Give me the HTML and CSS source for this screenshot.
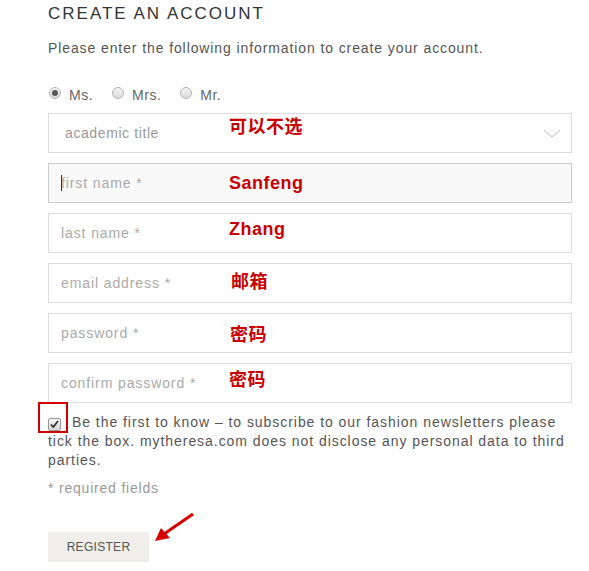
FILE: index.html
```html
<!DOCTYPE html>
<html lang="en">

<head>
    <meta charset="UTF-8">
    <meta name="viewport" content="width=device-width, initial-scale=1.0">
    <title>Create an account</title>
    <link rel="stylesheet" href="styles.css">
</head>

<body>
    <div class="register">
        <h1 class="title">CREATE AN ACCOUNT</h1>
        <p class="intro">Please enter the following information to create your account.</p>

        <div class="salutation">
            <label class="radio"><span class="dot checked"></span>Ms.</label>
            <label class="radio"><span class="dot"></span>Mrs.</label>
            <label class="radio"><span class="dot"></span>Mr.</label>
        </div>

        <div class="field">
            <div class="select">
                <span>academic title</span>
                <svg class="chevron" width="18" height="10" viewBox="0 0 18 10">
                    <polyline points="1,1 9,8 17,1" fill="none" stroke="#bbb" stroke-width="1" />
                </svg>
            </div>
            <span class="note note-title">可以不选</span>
        </div>

        <div class="field">
            <input class="input focus" type="text" placeholder="first name *">
            <span class="caret"></span>
            <span class="note note-first">Sanfeng</span>
        </div>

        <div class="field">
            <input class="input" type="text" placeholder="last name *">
            <span class="note note-last">Zhang</span>
        </div>

        <div class="field">
            <input class="input" type="text" placeholder="email address *">
            <span class="note note-email">邮箱</span>
        </div>

        <div class="field">
            <input class="input" type="password" placeholder="password *">
            <span class="note note-pass">密码</span>
        </div>

        <div class="field">
            <input class="input" type="password" placeholder="confirm password *">
            <span class="note note-confirm">密码</span>
        </div>

        <p class="newsletter">
            <span class="check">
                <svg width="9" height="8" viewBox="0 0 9 8">
                    <polyline points="1,4.5 3.3,7 8,1" fill="none" stroke="#333" stroke-width="1.8" />
                </svg>
            </span>Be the first to know – to subscribe to our fashion newsletters please tick the box. mytheresa.com does not disclose any personal data to third parties.
            <span class="mark"></span>
        </p>

        <p class="required">* required fields</p>

        <div class="actions">
            <button class="btn">REGISTER</button>
            <svg class="arrow" width="50" height="36" viewBox="0 0 50 36">
                <line x1="45" y1="2" x2="16" y2="22" stroke="#d40000" stroke-width="3" />
                <polygon points="7,29 13,16 22,26" fill="#d40000" />
            </svg>
        </div>
    </div>
</body>

</html>
```

FILE: styles.css
```css
* {
    margin: 0;
    padding: 0;
    box-sizing: border-box;
}

body {
    font-family: "Liberation Sans", Arial, sans-serif;
    color: #555;
    background: #fff;
}

.register {
    width: 524px;
    margin-left: 48px;
}

.title {
    font-size: 17px;
    font-weight: normal;
    line-height: 20px;
    letter-spacing: 2px;
    color: #333;
    margin-top: 4px;
}

.intro {
    font-size: 14px;
    line-height: 20px;
    letter-spacing: 0.9px;
    margin-top: 14px;
}

.salutation {
    display: flex;
    gap: 18px;
    margin-top: 27px;
    height: 20px;
}

.radio {
    display: flex;
    align-items: flex-start;
    font-size: 14px;
    line-height: 20px;
    letter-spacing: 0.5px;
    color: #666;
}

.dot {
    width: 12px;
    height: 12px;
    margin: 2px 8px 0 1px;
    border-radius: 50%;
    border: 1px solid #b5b5b5;
    background: linear-gradient(#f4f4f4, #d9d9d9);
    position: relative;
}

.dot.checked::after {
    content: "";
    position: absolute;
    left: 2px;
    top: 2px;
    width: 6px;
    height: 6px;
    border-radius: 50%;
    background: #555;
}

.field {
    position: relative;
    height: 40px;
    margin-bottom: 10px;
}

.salutation + .field {
    margin-top: 8px;
}

.select,
.input {
    width: 100%;
    height: 40px;
    border: 1px solid #ddd;
    background: #fff;
    font-family: "Liberation Sans", Arial, sans-serif;
    font-size: 14px;
    letter-spacing: 0.9px;
    color: #999;
}

.select {
    display: flex;
    align-items: center;
    justify-content: space-between;
    padding: 0 10px 0 16px;
    letter-spacing: 0.6px;
}

.chevron {
    margin-top: 2px;
}

.input {
    padding: 0 12px;
    outline: none;
}

.input::placeholder {
    color: #aaa;
}

.input.focus {
    background: #f9f9f9;
    border-color: #ccc;
}

.caret {
    position: absolute;
    left: 13px;
    top: 12px;
    width: 1px;
    height: 16px;
    background: #333;
}

.note {
    position: absolute;
    left: 181px;
    font-size: 18px;
    font-weight: bold;
    line-height: 20px;
    letter-spacing: 0.5px;
    color: #c80000;
    font-family: "Liberation Sans", "Noto Sans CJK SC", sans-serif;
}

.note-title { top: 4px; }
.note-first { top: 10px; }
.note-last { top: 6px; }
.note-email { top: 9px; left: 183px; }
.note-pass { top: 12px; left: 182px; }
.note-confirm { top: 7px; }

.newsletter {
    position: relative;
    font-size: 14px;
    line-height: 19px;
    letter-spacing: 0.95px;
    margin-top: 10px;
}

.check {
    display: inline-flex;
    align-items: center;
    justify-content: center;
    width: 13px;
    height: 13px;
    margin-right: 11px;
    vertical-align: -1px;
    border: 1px solid #999;
    border-radius: 2px;
    background: linear-gradient(#f7f7f7, #d6d6d6);
}

.mark {
    position: absolute;
    left: -10px;
    top: -11px;
    width: 30px;
    height: 31px;
    border: 2px solid #c00;
}

.required {
    font-size: 14px;
    line-height: 19px;
    letter-spacing: 0.8px;
    color: #999;
    margin-top: 9px;
}

.actions {
    position: relative;
    margin-top: 34px;
}

.btn {
    width: 101px;
    height: 30px;
    border: none;
    background: #efeeea;
    font-family: "Liberation Sans", Arial, sans-serif;
    font-size: 12px;
    letter-spacing: 0.3px;
    color: #555;
}

.arrow {
    position: absolute;
    left: 100px;
    top: -20px;
}
```
